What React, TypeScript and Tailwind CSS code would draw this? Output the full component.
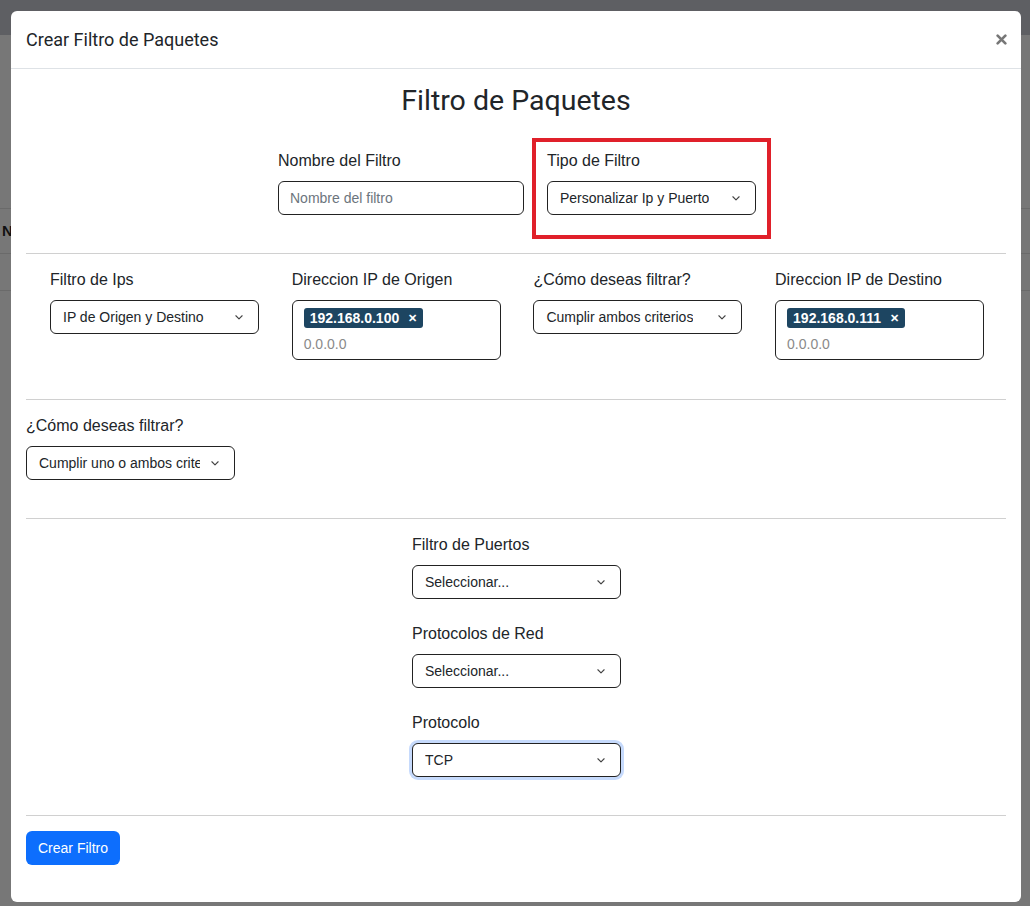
const roboto = "font-['Roboto','Liberation_Sans',sans-serif]";
const arial = "font-['Liberation_Sans',Arial,sans-serif]";

function Chevron() {
  return (
    <svg className="w-[10px] h-[10px] shrink-0 text-[#444]" viewBox="0 0 16 16" fill="none" stroke="currentColor">
      <path strokeLinecap="round" strokeLinejoin="round" strokeWidth={1.8} d="M3 6l5 5 5-5" />
    </svg>
  );
}

function Select({ value, width = "w-[209px]", focus = false }: { value: string; width?: string; focus?: boolean }) {
  return (
    <div
      className={`${width} h-[34px] flex items-center justify-between pl-[12px] pr-[14px] border border-[#222] rounded-[6px] bg-white ${
        focus ? "ring-[3px] ring-[#c6dafc]" : ""
      }`}
    >
      <span className="text-[14px] text-[#212529] whitespace-nowrap overflow-hidden mr-[10px]">{value}</span>
      <Chevron />
    </div>
  );
}

function TagInput({ tag }: { tag: string }) {
  return (
    <div className="w-[209px] h-[60px] border border-[#222] rounded-[6px] bg-white pl-[11px] pt-[7px]">
      <span className="flex w-fit items-center gap-[9px] h-[20px] px-[6px] rounded-[3px] bg-[#1d4561] text-white text-[14px] font-bold">
        {tag}
        <span className="text-[11px]">✕</span>
      </span>
      <div className="text-[14px] leading-[20px] text-[#8a8a8a] mt-[6px]">0.0.0.0</div>
    </div>
  );
}

function Field({ label, children }: { label: string; children: React.ReactNode }) {
  return (
    <div className="flex flex-col">
      <label className="text-[16px] leading-[24px] text-[#212529] mb-[8px]">{label}</label>
      {children}
    </div>
  );
}

function Divider() {
  return <div className="h-px bg-[#d0d0d0]" />;
}

export default function App() {
  return (
    <div className={`relative w-[1030px] h-[906px] overflow-hidden bg-[#777777] ${arial}`}>
      {/* backdrop: page behind the overlay */}
      <div className="h-[35px] bg-[#5e5f63]" />
      <div className="mt-[173px] border-t border-[#6a6a6a]" />
      <div className="h-[44px] flex items-center pl-[2px] text-[15px] font-bold text-[#111]">N</div>
      <div className="border-t border-[#6a6a6a]" />
      <div className="mt-[36px] border-t border-[#6a6a6a]" />

      {/* modal */}
      <div className="absolute left-[11px] top-[11px] w-[1010px] bg-white rounded-[6px]">
        <div className="h-[58px] flex items-center justify-between pl-[15px] pr-[14px] border-b border-[#dee2e6]">
          <h5 className={`${roboto} text-[18px] text-[#212529]`}>Crear Filtro de Paquetes</h5>
          <svg className="w-[11px] h-[11px] text-[#777]" viewBox="0 0 10 10" fill="none" stroke="currentColor">
            <path strokeWidth={2.4} strokeLinecap="round" d="M1.5 1.5l7 7M8.5 1.5l-7 7" />
          </svg>
        </div>

        <div className="px-[15px] pb-[37px]">
          <h2 className={`${roboto} text-center text-[28.5px] leading-[36px] text-[#212529] mt-[14px]`}>Filtro de Paquetes</h2>

          <div className="flex items-start ml-[252px] mt-[19px]">
            <div className="pt-[11px]">
              <Field label="Nombre del Filtro">
                <div className="w-[246px] h-[34px] flex items-center px-[11px] border border-[#222] rounded-[6px] text-[14px] text-[#6c757d]">
                  Nombre del filtro
                </div>
              </Field>
            </div>
            <div className="ml-[8px] border-[4px] border-[#e0202a] pt-[7px] pb-[20px] px-[11px]">
              <Field label="Tipo de Filtro">
                <Select value="Personalizar Ip y Puerto" />
              </Field>
            </div>
          </div>

          <div className="mt-[14px]">
            <Divider />
          </div>

          <div className="grid grid-cols-[repeat(4,209px)] gap-x-[32.7px] pl-[24px] pt-[14px] pb-[39px]">
            <Field label="Filtro de Ips">
              <Select value="IP de Origen y Destino" />
            </Field>
            <Field label="Direccion IP de Origen">
              <TagInput tag="192.168.0.100" />
            </Field>
            <Field label="¿Cómo deseas filtrar?">
              <Select value="Cumplir ambos criterios" />
            </Field>
            <Field label="Direccion IP de Destino">
              <TagInput tag="192.168.0.111" />
            </Field>
          </div>

          <Divider />

          <div className="pt-[14px] pb-[38px]">
            <Field label="¿Cómo deseas filtrar?">
              <Select value="Cumplir uno o ambos criterios" />
            </Field>
          </div>

          <Divider />

          <div className="flex flex-col gap-[23px] pl-[386px] pt-[14px] pb-[38px]">
            <Field label="Filtro de Puertos">
              <Select value="Seleccionar..." />
            </Field>
            <Field label="Protocolos de Red">
              <Select value="Seleccionar..." />
            </Field>
            <Field label="Protocolo">
              <Select value="TCP" focus />
            </Field>
          </div>

          <Divider />

          <button className="mt-[15px] h-[34px] px-[12px] rounded-[6px] bg-[#0d6efd] text-white text-[14px]">
            Crear Filtro
          </button>
        </div>
      </div>
    </div>
  );
}
